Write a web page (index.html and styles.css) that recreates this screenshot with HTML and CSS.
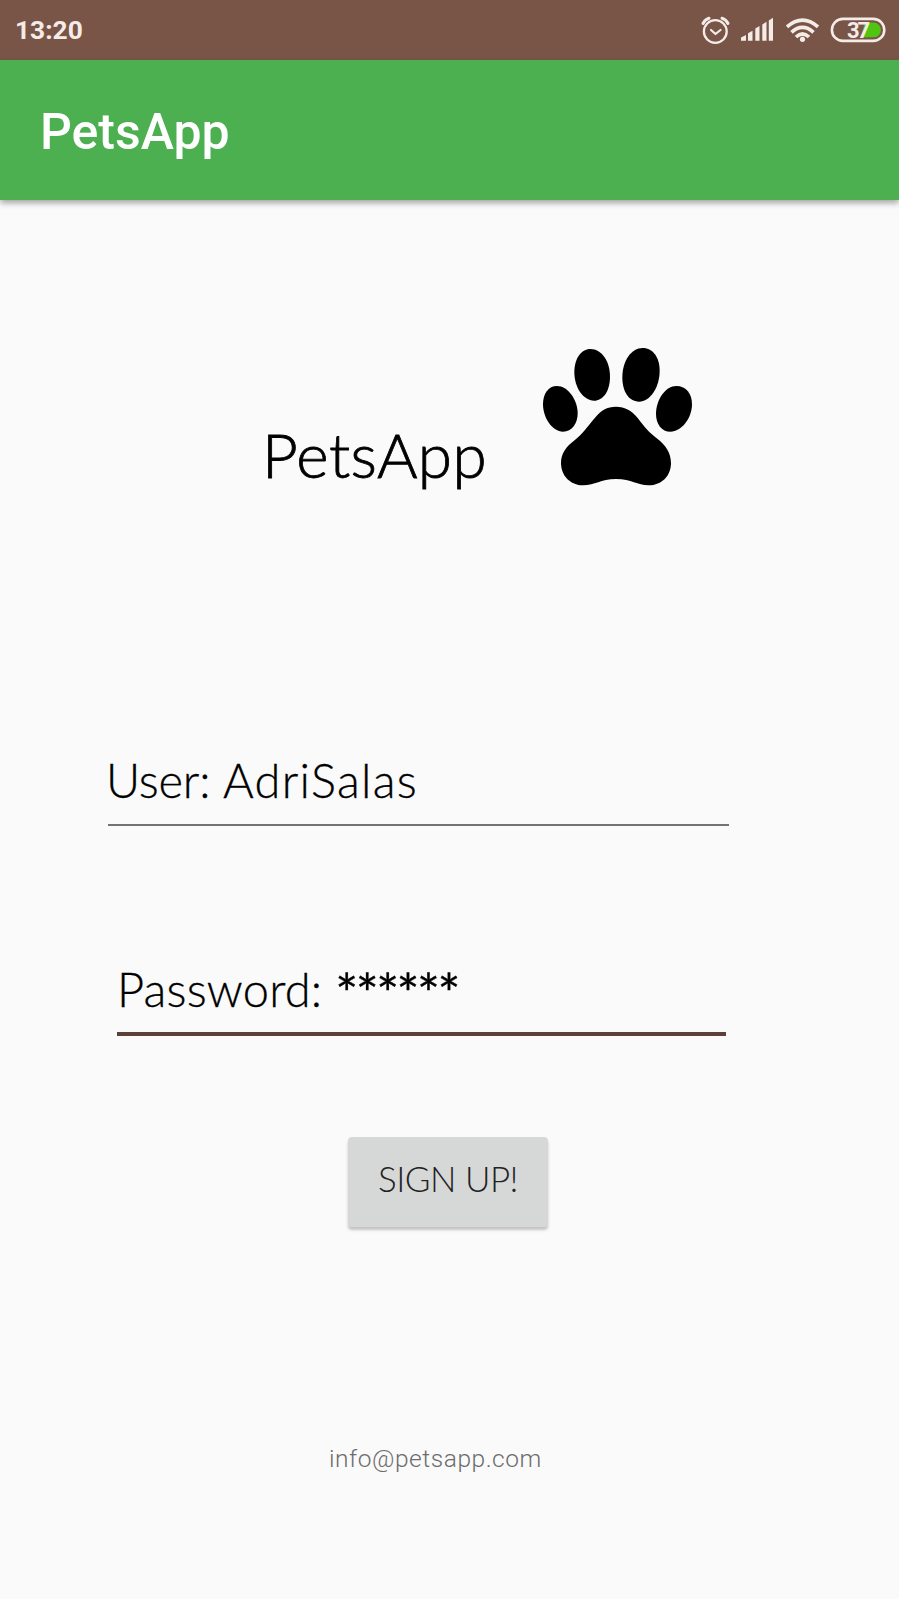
FILE: index.html
```html
<!DOCTYPE html>
<html lang="en">
<head>
<meta charset="utf-8">
<title>PetsApp</title>
<link rel="stylesheet" href="styles.css">
</head>
<body>
<div class="status">
  <span class="time">13:20</span>
  <svg class="status-icons" viewBox="690 0 209 60" width="209" height="60" fill="none" stroke="#f5ebe7" stroke-linecap="round">
    <g stroke-width="2.300">
      <circle cx="715.300" cy="31.500" r="11.400"/>
      <path d="M711 30l4.500 4 5-4" stroke-width="2.200" stroke-linejoin="round"/>
      <path d="M703 23.500q2-4 6-5.200M728 23.500q-2-4-6-5.200" stroke-width="3"/>
    </g>
    <path d="M741 40.700v-3.200l5-2.500v5.700zM748 40.700v-7.500l4.500-2.500v10zM755.300 40.700V28.500l4.200-2.500v14.700zM762.300 40.700V24.500l4.200-2.700v18.900zM768.800 40.700V20.500l4.200-2.700v22.900z" fill="#f5ebe7" stroke="none"/>
    <g stroke-width="3.700" stroke-linecap="butt">
      <path d="M787 26.800Q802.500 13.500 818 26.800"/>
      <path d="M791.500 32.300Q802.500 22.500 813.500 32.300"/>
      <path d="M796 37Q802.500 31 809 37"/>
    </g>
    <circle cx="802.500" cy="39.300" r="2.600" fill="#f5ebe7" stroke="none"/>
    <rect x="831.900" y="18.900" width="52.400" height="22" rx="11" stroke-width="2.600"/>
    <path d="M865 22.500h8.500a7.400 7.400 0 0 1 0 14.800H861z" fill="#4fc510" stroke="none"/>
    <text class="battery" x="847" y="37.500" textLength="23">37</text>
  </svg>
</div>
<header class="appbar">PetsApp</header>
<main>
  <div class="brand">
    <h1>PetsApp</h1>
    <svg class="paw" viewBox="0 0 525 480" width="175" height="160">
      <path d="M181 42C216 42 240 80 240 125C240 170 218 197 192 197C160 197 133 158 133 112C133 70 154 42 181 42Z"/>
      <path d="M338 39C370 39 389 69 389 107C389 157 360 200 327 200C296 200 277 170 277 127C277 77 304 39 338 39Z"/>
      <path d="M81 153C113 153 143 194 143 235C143 266 126 290 99 290C67 290 39 249 39 208C39 176 55 153 81 153Z"/>
      <path d="M439 153C469 153 486 177 486 208C486 249 455 290 421 290C395 290 378 267 378 236C378 194 407 153 439 153Z"/>
      <path d="M258 215C285 215 306 227 323 249C348 281 355 291 382 311C408 331 423 354 423 384C423 422 396 451 356 451C321 451 306 432 258 432C211 432 196 451 159 451C121 451 93 422 93 384C93 354 109 335 132 317C157 298 172 275 195 248C213 226 231 215 258 215Z"/>
    </svg>
  </div>
  <div class="field user">User: <span class="name">AdriSalas</span></div>
  <div class="field password">Password: <span class="mask">******</span></div>
  <button class="signup">SIGN UP!</button>
  <div class="email">info@petsapp.com</div>
</main>
</body>
</html>
```

FILE: styles.css
```css
* { box-sizing: border-box; }
body {
  margin: 0;
  width: 899px;
  height: 1599px;
  overflow: hidden;
  background: #fafafa;
  color: #000;
  font-family: Lato, sans-serif;
  font-weight: 300;
}
.status {
  height: 60px;
  display: flex;
  justify-content: space-between;
  background: #795548;
}
.time {
  padding-left: 15px;
  font: 700 26.3px/61px Roboto, sans-serif;
  color: #f5ebe7;
}
.battery {
  font: 700 22px Roboto, sans-serif;
  fill: #f5ebe7;
  stroke: none;
}
.appbar {
  height: 140px;
  padding-left: 40px;
  font: 500 50px/145px Roboto, sans-serif;
  color: #fff;
  background: #4caf50;
  box-shadow: 0 3px 6px rgba(0, 0, 0, .35);
}
main {
  display: flex;
  flex-direction: column;
  align-items: flex-start;
}
.brand {
  display: flex;
  height: 170px;
  margin: 135px 0 0 262px;
}
h1 {
  width: 268px;
  margin: 79px 0 0;
  font-size: 62px;
  font-weight: 300;
  line-height: 80px;
  letter-spacing: .4px;
  white-space: nowrap;
  -webkit-text-stroke: .8px #000;
}
.paw { flex: none; }
.field {
  display: flex;
  justify-content: flex-start;
  white-space: pre;
  font-size: 47px;
  line-height: 60px;
  -webkit-text-stroke: .3px #000;
}
.user {
  width: 621px;
  height: 76px;
  margin: 245px 0 0 108px;
  border-bottom: 2px solid #747373;
  letter-spacing: -.2px;
  text-indent: -2px;
}
.name {
  padding-left: 2px;
  letter-spacing: 1.3px;
}
.password {
  width: 609px;
  height: 77px;
  margin: 133px 0 0 117px;
  border-bottom: 4px solid #5d4037;
  letter-spacing: .2px;
}
.mask {
  font-size: 54px;
  font-weight: 400;
  line-height: 68px;
  letter-spacing: -2.5px;
}
.signup {
  width: 200px;
  height: 90px;
  margin: 101px 0 0 348px;
  padding: 0 0 9px;
  border: 0;
  border-radius: 4px;
  background: #d6d8d7;
  box-shadow: 0 3px 3px rgba(0, 0, 0, .22);
  color: #222;
  font: 300 35px/60px Lato, sans-serif;
  letter-spacing: -.5px;
  white-space: nowrap;
}
.email {
  margin: 212px 0 0 329px;
  color: #6c6c6c;
  font: 300 24.5px/40px Roboto, sans-serif;
  letter-spacing: .55px;
}
```
